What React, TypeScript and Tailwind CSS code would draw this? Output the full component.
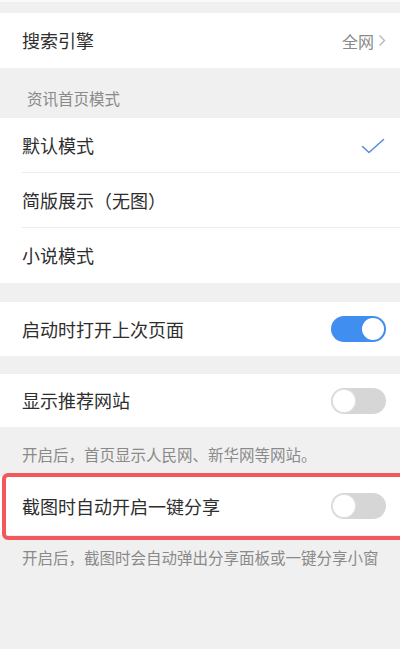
import { ReactNode } from 'react'

function Toggle({ on }: { on: boolean }) {
  return (
    <div
      className={`w-[55px] h-[26px] rounded-full p-[2px] flex items-center ${on ? 'bg-[#3f8ef0] justify-end' : 'bg-[#d6d6d6] justify-start'}`}
    >
      <div className={`w-[22px] h-[22px] rounded-full bg-white ${on ? '' : 'shadow-[0_0_0_1px_#e2e2e2]'}`} />
    </div>
  )
}

function Row({ label, right, h = 'h-[55px]', divider = false }: { label: string; right?: ReactNode; h?: string; divider?: boolean }) {
  return (
    <div className={`bg-white ${h} pl-[22px] relative`}>
      <div className="h-full flex items-center justify-between pr-[14px]">
        <span className="text-[18px] text-[#2e2e2e]">{label}</span>
        {right}
      </div>
      {divider && <div className="absolute left-[22px] right-0 bottom-0 h-px bg-[#ececec]" />}
    </div>
  )
}

export default function App() {
  return (
    <div
      className="w-[400px] h-[649px] overflow-hidden bg-[#f0f0f0]"
      style={{ fontFamily: '"Noto Sans CJK SC", "Noto Sans", sans-serif' }}
    >
      <div className="h-[13px] border-t-2 border-[#fafafa]" />
      <Row
        label="搜索引擎"
        right={
          <span className="flex items-center gap-[4px] text-[16px] text-[#8a8a8a]">
            全网
            <svg width="8" height="13" viewBox="0 0 8 13" fill="none">
              <path d="M1.5 1.5 L6.5 6.5 L1.5 11.5" stroke="#b5b5b5" strokeWidth="1.3" />
            </svg>
          </span>
        }
      />
      <div className="h-[50px] flex items-end pb-[10px] pl-[27px]">
        <span className="text-[15.5px] text-[#8a8a8a] leading-[20px]">资讯首页模式</span>
      </div>
      <Row
        label="默认模式"
        divider
        right={
          <svg width="24" height="16" viewBox="0 0 24 16" fill="none" className="mr-[1px]">
            <path d="M1.5 8.5 L8 14.5 L22.5 1.5" stroke="#5b8ed8" strokeWidth="1.6" strokeLinecap="round" strokeLinejoin="round" />
          </svg>
        }
      />
      <Row label="简版展示（无图）" divider />
      <Row label="小说模式" />
      <div className="h-[19px]" />
      <Row label="启动时打开上次页面" h="h-[54px]" right={<Toggle on />} />
      <div className="h-[18px]" />
      <Row label="显示推荐网站" h="h-[53px]" right={<Toggle on={false} />} />
      <div className="h-[50px] pt-[17px] pl-[22px]">
        <p className="text-[15.5px] leading-[20px] text-[#8a8a8a]">开启后，首页显示人民网、新华网等网站。</p>
      </div>
      <div className="relative">
        <Row label="截图时自动开启一键分享" h="h-[58px]" right={<Toggle on={false} />} />
        <div className="absolute left-[2px] -right-3 -top-[4px] -bottom-[5px] border-4 border-[#f2595a] rounded-[6px] pointer-events-none" />
      </div>
      <div className="pt-[12px] pl-[22px]">
        <p className="text-[15.5px] leading-[20px] text-[#8a8a8a] whitespace-nowrap">开启后，截图时会自动弹出分享面板或一键分享小窗</p>
      </div>
    </div>
  )
}
